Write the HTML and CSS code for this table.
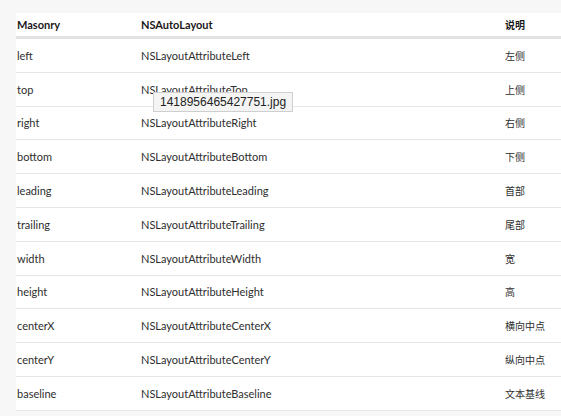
FILE: index.html
```html
<!DOCTYPE html>
<html>
<head>
<meta charset="utf-8">
<link rel="stylesheet" href="styles.css">
</head>
<body>
<div class="page">
  <table class="map">
    <thead>
      <tr><th class="c1">Masonry</th><th class="c2">NSAutoLayout</th><th class="c3"><span class="zh">说明</span></th></tr>
    </thead>
    <tbody>
      <tr><td>left</td><td>NSLayoutAttributeLeft</td><td class="zh">左侧</td></tr>
      <tr><td>top</td><td>NSLayoutAttributeTop</td><td class="zh">上侧</td></tr>
      <tr><td>right</td><td>NSLayoutAttributeRight</td><td class="zh">右侧</td></tr>
      <tr><td>bottom</td><td>NSLayoutAttributeBottom</td><td class="zh">下侧</td></tr>
      <tr><td>leading</td><td>NSLayoutAttributeLeading</td><td class="zh">首部</td></tr>
      <tr><td>trailing</td><td>NSLayoutAttributeTrailing</td><td class="zh">尾部</td></tr>
      <tr><td>width</td><td>NSLayoutAttributeWidth</td><td class="zh">宽</td></tr>
      <tr><td>height</td><td>NSLayoutAttributeHeight</td><td class="zh">高</td></tr>
      <tr><td>centerX</td><td>NSLayoutAttributeCenterX</td><td class="zh">横向中点</td></tr>
      <tr><td>centerY</td><td>NSLayoutAttributeCenterY</td><td class="zh">纵向中点</td></tr>
      <tr><td>baseline</td><td>NSLayoutAttributeBaseline</td><td class="zh">文本基线</td></tr>
    </tbody>
  </table>
  <div class="tooltip">1418956465427751.jpg</div>
</div>
</body>
</html>
```
FILE: styles.css
```css
html, body {
  margin: 0;
  padding: 0;
  background: #f7f7f7;
}
.page {
  position: relative;
  padding: 13px 0 0 16px;
  font-family: "Lato", "Noto Sans CJK SC", sans-serif;
  font-size: 11px;
  color: #2e2e2e;
}
.map {
  width: 545px;
  border-collapse: collapse;
  background: #fff;
  table-layout: fixed;
}
.map th {
  text-align: left;
  font-weight: bold;
  color: #1a1a1a;
  height: 23px;
  padding: 0 0 0 1px;
  border-bottom: 3px solid #e2e2e2;
  vertical-align: middle;
}
.map td {
  height: 32.8px;
  padding: 0 0 0 1px;
  border-bottom: 1px solid #e6e6e6;
  vertical-align: middle;
}
.map .zh {
  font-family: "Noto Sans CJK SC", sans-serif;
  font-size: 10px;
}
.c1 { width: 123px; }
.c2 { width: 363px; }
.c3 { width: 59px; }
.tooltip {
  position: absolute;
  left: 153px;
  top: 92px;
  height: 18px;
  line-height: 18px;
  padding: 0 6px;
  background: #f4f4f4;
  border: 1px solid #cfcfcf;
  font-family: "Liberation Sans", sans-serif;
  font-size: 12px;
  color: #222;
}
```
